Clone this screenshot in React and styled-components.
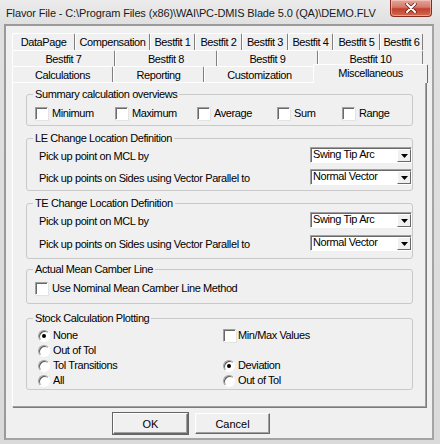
import React from "react";
import styled, { createGlobalStyle } from "styled-components";

const GlobalStyle = createGlobalStyle`
  html, body {
    margin: 0;
    padding: 0;
    background: #ffffff;
  }
  body {
    font-family: "Liberation Sans", Arial, sans-serif;
    font-size: 11px;
    color: #000;
  }
`;

const rowOne = [
  ["DataPage", 63],
  ["Compensation", 75],
  ["Bestfit 1", 45],
  ["Bestfit 2", 47],
  ["Bestfit 3", 46],
  ["Bestfit 4", 45],
  ["Bestfit 5", 47],
  ["Bestfit 6", 43],
];
const rowTwo = [
  ["Bestfit 7", 103],
  ["Bestfit 8", 102],
  ["Bestfit 9", 101],
  ["Bestfit 10", 105],
];
const rowThree = [
  ["Calculations", 101],
  ["Reporting", 91],
  ["Customization", 111],
  ["Miscellaneous", 111, true],
];

const summary = ["Minimum", "Maximum", "Average", "Sum", "Range"];

function CloseGlyph() {
  return (
    <svg width="12" height="10" viewBox="0 0 12 10">
      <path d="M2 1 L10 9 M10 1 L2 9" stroke="#5a1d16" strokeWidth="3.4" strokeLinecap="round" />
      <path d="M2 1 L10 9 M10 1 L2 9" stroke="#ffffff" strokeWidth="2" strokeLinecap="round" />
    </svg>
  );
}

function Combo({ value }) {
  return (
    <ComboBox>
      <ComboText>{value}</ComboText>
      <ComboButton>
        <svg width="7" height="4" viewBox="0 0 7 4">
          <path d="M0 0 H7 L3.5 4 Z" fill="#000" />
        </svg>
      </ComboButton>
    </ComboBox>
  );
}

function Check({ label, gap = 4 }) {
  return (
    <Option $gap={gap}>
      <CheckBox />
      <span>{label}</span>
    </Option>
  );
}

function Radio({ label, checked }) {
  return (
    <Option $gap={3}>
      <RadioDot $checked={checked} />
      <span>{label}</span>
    </Option>
  );
}

function App() {
  return (
    <>
      <GlobalStyle />
      <Window>
        <TitleBar>
          <Title>Flavor File - C:\Program Files (x86)\WAI\PC-DMIS Blade 5.0 (QA)\DEMO.FLV</Title>
          <CloseButton>
            <CloseGlyph />
          </CloseButton>
        </TitleBar>
        <Client>
          <TabStrip>
            <TabRow $h={17}>
              {rowOne.map(([t, w]) => (
                <Tab key={t} $w={w}>{t}</Tab>
              ))}
            </TabRow>
            <TabRow $h={16}>
              {rowTwo.map(([t, w]) => (
                <Tab key={t} $w={w}>{t}</Tab>
              ))}
            </TabRow>
            <TabRow $h={16}>
              {rowThree.map(([t, w, active]) => (
                <Tab key={t} $w={w} $active={active}>{t}</Tab>
              ))}
            </TabRow>
          </TabStrip>
          <Panel>
            <Group $mt={0}>
              <Legend>Summary calculation overviews</Legend>
              <CheckRow>
                {summary.map((t) => (
                  <Check key={t} label={t} />
                ))}
              </CheckRow>
            </Group>

            <Group $mt={6}>
              <Legend>LE Change Location Definition</Legend>
              <PickList>
                <PickRow>
                  <span>Pick up point on MCL by</span>
                  <Combo value="Swing Tip Arc" />
                </PickRow>
                <PickRow>
                  <span>Pick up points on Sides using Vector Parallel to</span>
                  <Combo value="Normal Vector" />
                </PickRow>
              </PickList>
            </Group>

            <Group $mt={6}>
              <Legend>TE Change Location Definition</Legend>
              <PickList $gap={7} $pb={7}>
                <PickRow>
                  <span>Pick up point on MCL by</span>
                  <Combo value="Swing Tip Arc" />
                </PickRow>
                <PickRow>
                  <span>Pick up points on Sides using Vector Parallel to</span>
                  <Combo value="Normal Vector" />
                </PickRow>
              </PickList>
            </Group>

            <Group $mt={4}>
              <Legend>Actual Mean Camber Line</Legend>
              <SingleRow>
                <Check label="Use Nominal Mean Camber Line  Method" />
              </SingleRow>
            </Group>

            <Group $mt={8}>
              <Legend>Stock Calculation Plotting</Legend>
              <PlotGrid>
                <Radio label="None" checked />
                <Check label="Min/Max Values" gap={2} />
                <Radio label="Out of Tol" />
                <span />
                <Radio label="Tol Transitions" />
                <Radio label="Deviation" checked />
                <Radio label="All" />
                <Radio label="Out of Tol" />
              </PlotGrid>
            </Group>
          </Panel>
          <ButtonBar>
            <PushButton $default>OK</PushButton>
            <PushButton>Cancel</PushButton>
          </ButtonBar>
        </Client>
      </Window>
    </>
  );
}

export default App;

const Window = styled.div`
  width: 440px;
  height: 444px;
  box-sizing: border-box;
  padding: 0 6px 4px 4px;
  display: flex;
  flex-direction: column;
  background: linear-gradient(#ececec, #e0e0e0 24px, #dadada);
`;

const TitleBar = styled.div`
  height: 24px;
  display: flex;
  justify-content: space-between;
  align-items: flex-start;
`;

const Title = styled.div`
  flex: 1;
  min-width: 0;
  overflow: hidden;
  padding: 6px 0 0 2px;
  font-size: 11px;
  letter-spacing: -0.13px;
  line-height: 14px;
  color: #1a1a1a;
  white-space: nowrap;
`;

const CloseButton = styled.div`
  flex: none;
  width: 42px;
  height: 17px;
  margin-right: 2px;
  box-sizing: border-box;
  border: 1px solid #8a2a1f;
  border-top: none;
  border-radius: 0 0 4px 4px;
  background: linear-gradient(#e3a69c, #d4786a 45%, #c2402d 55%, #d06a4f);
  box-shadow: inset 0 0 0 1px rgba(255, 220, 210, 0.5);
  display: flex;
  align-items: center;
  justify-content: center;
`;

const Client = styled.div`
  flex: 1;
  display: flex;
  flex-direction: column;
  padding: 7px 6px 4px 6px;
  background: #f0f0f0;
  border: 2px solid #9d9d9d;
  border-color: #9a9a9a #a4a4a4 #a4a4a4 #9a9a9a;
  letter-spacing: -0.4px;
`;

const TabStrip = styled.div`
  display: flex;
  flex-direction: column;
`;

const TabRow = styled.div`
  display: flex;
  height: ${(p) => p.$h}px;
`;

const Tab = styled.div`
  flex: 0 0 ${(p) => p.$w}px;
  box-sizing: border-box;
  display: flex;
  align-items: center;
  justify-content: center;
  white-space: nowrap;
  border-top: 1px solid #ffffff;
  border-left: 1px solid #ffffff;
  border-right: 1px solid #7f7f7f;
  border-radius: 2px 2px 0 0;
  background: #f0f0f0;
  padding-bottom: ${(p) => (p.$active ? 2 : 0)}px;
  ${(p) =>
    p.$active &&
    `
    position: relative;
    z-index: 1;
    margin: -2px -2px -1px -2px;
    flex-basis: ${p.$w + 4}px;
    border-right-color: #696969;
  `}
`;

const Panel = styled.div`
  flex: 1;
  display: flex;
  flex-direction: column;
  padding: 5px 12px 0 13px;
  border: 1px solid #a0a0a0;
  border-left-color: #ffffff;
  border-top-color: #ffffff;
  box-shadow: 1px 1px 0 #7c7c7c;
`;

const Group = styled.fieldset`
  margin: ${(p) => p.$mt}px 0 0 0;
  padding: 0;
  min-width: 0;
  border: 1px solid #c9c9c9;
  border-radius: 3px;
`;

const Legend = styled.legend`
  margin-left: 6px;
  padding: 0 2px;
  line-height: 13px;
`;

const Option = styled.label`
  display: flex;
  align-items: center;
  gap: ${(p) => p.$gap}px;
  white-space: nowrap;
  line-height: 13px;
`;

const CheckBox = styled.span`
  width: 13px;
  height: 13px;
  box-sizing: border-box;
  flex: none;
  background: #ffffff;
  border: 1px solid;
  border-color: #a0a0a0 #ffffff #ffffff #a0a0a0;
  box-shadow: inset 1px 1px 0 #696969, 1px 1px 0 #e3e3e3;
`;

const RadioDot = styled.span`
  width: 12px;
  height: 12px;
  box-sizing: border-box;
  flex: none;
  border-radius: 50%;
  background: #ffffff;
  border: 1px solid;
  border-color: #a0a0a0 #ffffff #ffffff #a0a0a0;
  box-shadow: inset 1px 1px 0 #5a5a5a;
  display: flex;
  align-items: center;
  justify-content: center;
  &::after {
    content: "";
    width: 4px;
    height: 4px;
    border-radius: 50%;
    background: ${(p) => (p.$checked ? "#000" : "transparent")};
  }
`;

const CheckRow = styled.div`
  display: grid;
  grid-template-columns: 80px 82px 80px 65px auto;
  padding: 6px 0 5px 8px;
`;

const PickList = styled.div`
  display: flex;
  flex-direction: column;
  gap: ${(p) => p.$gap || 6}px;
  padding: 2px 0 ${(p) => p.$pb || 5}px 12px;
`;

const PickRow = styled.div`
  display: flex;
  align-items: center;
  justify-content: space-between;
  height: 16px;
  & > span {
    padding-top: 2px;
  }
`;

const ComboBox = styled.div`
  width: 102px;
  height: 16px;
  box-sizing: border-box;
  display: flex;
  background: #ffffff;
  border: 1px solid;
  border-color: #a0a0a0 #ffffff #ffffff #a0a0a0;
  box-shadow: inset 1px 1px 0 #696969;
`;

const ComboText = styled.div`
  flex: 1;
  padding: 0 0 0 2px;
  line-height: 13px;
`;

const ComboButton = styled.div`
  width: 14px;
  box-sizing: border-box;
  margin: 1px 0 0 0;
  background: #f0f0f0;
  border: 1px solid;
  border-color: #ffffff #696969 #696969 #ffffff;
  display: flex;
  align-items: center;
  justify-content: center;
`;

const SingleRow = styled.div`
  padding: 6px 0 8px 8px;
`;

const PlotGrid = styled.div`
  display: grid;
  grid-template-columns: 185px auto;
  grid-auto-rows: 15px;
  align-items: center;
  padding: 3px 0 1px 11px;
`;

const ButtonBar = styled.div`
  display: flex;
  gap: 7px;
  margin-top: 6px;
  padding-left: 101px;
`;

const PushButton = styled.div`
  width: 75px;
  height: 21px;
  box-sizing: border-box;
  display: flex;
  align-items: center;
  justify-content: center;
  background: #f0f0f0;
  border: 1px solid;
  border-color: #ffffff #696969 #696969 #ffffff;
  box-shadow: inset -1px -1px 0 #a0a0a0;
  outline: ${(p) => (p.$default ? "1px solid #646464" : "none")};
  letter-spacing: 0;
`;
